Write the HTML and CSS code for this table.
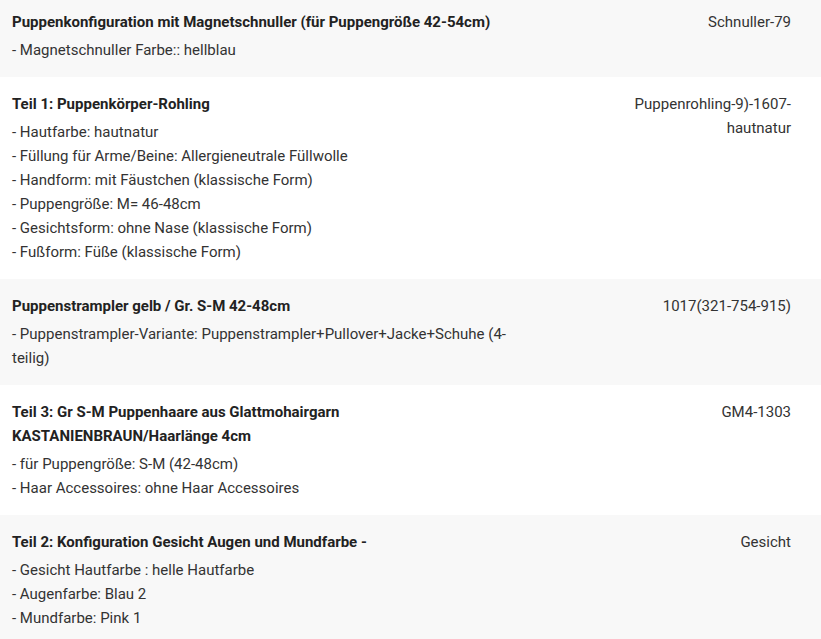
FILE: index.html
```html
<!DOCTYPE html>
<html lang="de">
<head>
<meta charset="utf-8">
<title>Bestellpositionen</title>
<link rel="stylesheet" href="styles.css">
</head>
<body>
<div class="list">
  <div class="item item--grey item--first">
    <div class="info">
      <div class="title">Puppenkonfiguration mit Magnetschnuller (für Puppengröße 42-54cm)</div>
      <ul class="opts">
        <li>- Magnetschnuller Farbe:: hellblau</li>
      </ul>
    </div>
    <div class="sku">Schnuller-79</div>
  </div>
  <div class="item">
    <div class="info">
      <div class="title">Teil 1: Puppenkörper-Rohling</div>
      <ul class="opts">
        <li>- Hautfarbe: hautnatur</li>
        <li>- Füllung für Arme/Beine: Allergieneutrale Füllwolle</li>
        <li>- Handform: mit Fäustchen (klassische Form)</li>
        <li>- Puppengröße: M= 46-48cm</li>
        <li>- Gesichtsform: ohne Nase (klassische Form)</li>
        <li>- Fußform: Füße (klassische Form)</li>
      </ul>
    </div>
    <div class="sku">Puppenrohling-9)-1607-hautnatur</div>
  </div>
  <div class="item item--grey">
    <div class="info">
      <div class="title">Puppenstrampler gelb / Gr. S-M 42-48cm</div>
      <ul class="opts">
        <li>- Puppenstrampler-Variante: Puppenstrampler+Pullover+Jacke+Schuhe (4-teilig)</li>
      </ul>
    </div>
    <div class="sku">1017(321-754-915)</div>
  </div>
  <div class="item">
    <div class="info">
      <div class="title">Teil 3: Gr S-M Puppenhaare aus Glattmohairgarn KASTANIENBRAUN/Haarlänge 4cm</div>
      <ul class="opts">
        <li>- für Puppengröße: S-M (42-48cm)</li>
        <li>- Haar Accessoires: ohne Haar Accessoires</li>
      </ul>
    </div>
    <div class="sku">GM4-1303</div>
  </div>
  <div class="item item--grey">
    <div class="info">
      <div class="title">Teil 2: Konfiguration Gesicht Augen und Mundfarbe -</div>
      <ul class="opts">
        <li>- Gesicht Hautfarbe : helle Hautfarbe</li>
        <li>- Augenfarbe: Blau 2</li>
        <li>- Mundfarbe: Pink 1</li>
      </ul>
    </div>
    <div class="sku">Gesicht</div>
  </div>
</div>
</body>
</html>
```

FILE: styles.css
```css
html, body {
  margin: 0;
  padding: 0;
  background: #ffffff;
}
body {
  font-family: Roboto, "Liberation Sans", Arial, sans-serif;
  font-size: 15px;
  line-height: 24px;
  color: #333333;
}
.list {
  display: flex;
  flex-direction: column;
}
.item {
  display: grid;
  grid-template-columns: 510px 1fr;
  column-gap: 80px;
  padding: 15px 30px 15px 12px;
  background: #ffffff;
}
.item--grey {
  background: #f8f8f8;
}
.item--first {
  padding-top: 10px;
}
.title {
  font-weight: 700;
  color: #222222;
  margin-bottom: 4px;
}
.opts {
  list-style: none;
  margin: 0;
  padding: 0;
}
.sku {
  text-align: right;
  color: #333333;
}
```
